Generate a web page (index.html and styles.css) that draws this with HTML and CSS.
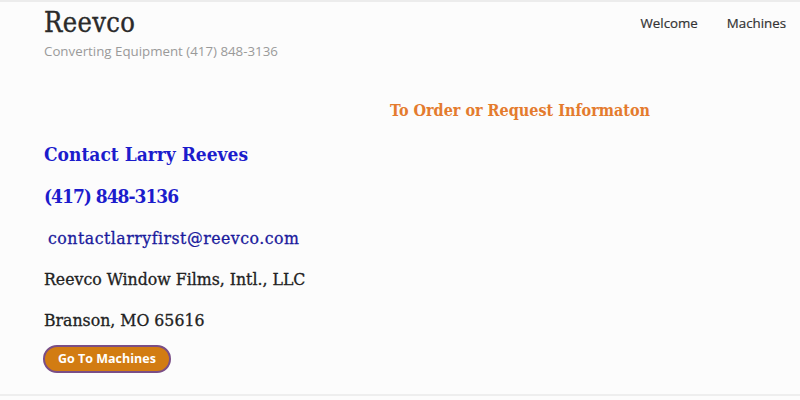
FILE: index.html
```html
<!DOCTYPE html>
<html>
<head>
<meta charset="utf-8">
<link rel="stylesheet" href="styles.css">
</head>
<body>
<div class="page">
  <header class="header">
    <div class="brand">
      <div class="title">Reevco</div>
      <div class="tagline">Converting Equipment (417) 848-3136</div>
    </div>
    <nav class="nav">
      <a class="nav-link">Welcome</a>
      <a class="nav-link">Machines</a>
    </nav>
  </header>
  <main class="content">
    <h2 class="order">To Order or Request Informaton</h2>
    <h3 class="contact">Contact Larry Reeves</h3>
    <h3 class="contact phone">(417) 848-3136</h3>
    <p class="email">contactlarryfirst@reevco.com</p>
    <p class="line">Reevco Window Films, Intl., LLC</p>
    <p class="line">Branson, MO 65616</p>
    <a class="btn">Go To Machines</a>
  </main>
</div>
</body>
</html>
```
FILE: styles.css
```css
html, body { margin: 0; padding: 0; }
body {
  width: 800px; height: 400px; overflow: hidden;
  background: #fcfcfc;
}
.page {
  height: 396px;
  border-top: 2px solid #ececec;
  border-bottom: 2px solid #eeeeee;
  box-sizing: border-box;
}
.header {
  display: flex;
  justify-content: space-between;
  padding: 0 14px 0 44px;
}
.brand { padding-top: 5px; }
.title {
  font-family: "DejaVu Serif Condensed", "DejaVu Serif", serif;
  font-size: 27px;
  line-height: 32px;
  color: #2a2a2a;
  letter-spacing: 0.4px;
  -webkit-text-stroke: 0.4px #2a2a2a;
}
.tagline {
  font-family: "Open Sans", sans-serif;
  font-size: 13.3px;
  color: #9a9a9a;
  margin-top: 3px;
}
.nav { display: flex; gap: 29px; padding-top: 12px; }
.nav-link {
  font-family: "Open Sans", sans-serif;
  font-size: 13.3px;
  color: #333;
  -webkit-text-stroke: 0.2px #333;
}
.content { padding: 0 0 0 44px; }
.order {
  font-family: "DejaVu Serif Condensed", "DejaVu Serif", serif;
  font-weight: bold;
  font-size: 16px;
  color: #e47b2e;
  margin: 40px 0 0 346px;
  line-height: 22px;
}
.contact {
  font-family: "DejaVu Serif Condensed", "DejaVu Serif", serif;
  font-weight: bold;
  font-size: 19px;
  color: #1c1ccc;
  margin: 20px 0 0 0;
  line-height: 24px;
}
.phone { margin-top: 18px; letter-spacing: -1px; }
.email {
  font-family: "DejaVu Serif Condensed", "DejaVu Serif", serif;
  font-size: 17.5px;
  color: #1a1a9c;
  margin: 19px 0 0 4px;
  line-height: 22px;
  letter-spacing: 0.5px;
  -webkit-text-stroke: 0.3px #1a1a9c;
}
.line {
  font-family: "DejaVu Serif Condensed", "DejaVu Serif", serif;
  font-size: 17.5px;
  color: #222;
  margin: 19px 0 0 0;
  line-height: 22px;
  -webkit-text-stroke: 0.3px #222;
}
.btn {
  display: inline-block;
  margin-top: 14px;
  margin-left: -1px;
  background: #d27c12;
  border: 2px solid #7a4e86;
  border-radius: 15px;
  color: #fff;
  font-family: "Open Sans", sans-serif;
  font-weight: bold;
  font-size: 12.5px;
  line-height: 24px;
  padding: 0 13px;
}
```
